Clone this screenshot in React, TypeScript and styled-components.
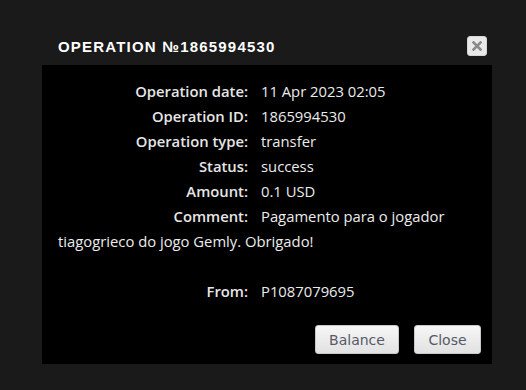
import React from "react";
import styled, { createGlobalStyle } from "styled-components";

const GlobalStyle = createGlobalStyle`
  html, body {
    margin: 0;
    padding: 0;
    background: #1a1a1a;
  }
  body {
    width: 526px;
    height: 390px;
    overflow: hidden;
  }
`;

const Page = styled.div`
  display: flex;
  flex-direction: column;
  padding: 25px 0 0 42px;
  height: 390px;
  box-sizing: border-box;
`;

const Dialog = styled.div`
  display: flex;
  flex-direction: column;
  width: 450px;
`;

const Header = styled.div`
  display: flex;
  align-items: center;
  justify-content: space-between;
  height: 40px;
  padding: 0 5px 0 16px;
`;

const Title = styled.h2`
  margin: 0;
  padding-top: 2px;
  font-family: "Liberation Sans", Arial, sans-serif;
  font-size: 15px;
  font-weight: bold;
  letter-spacing: 1.2px;
  color: #ffffff;
`;

const CloseIcon = styled.button`
  display: flex;
  align-items: center;
  justify-content: center;
  width: 20px;
  height: 20px;
  padding: 0;
  margin-top: 1px;
  border: 1px solid #d6d6d6;
  border-radius: 3px;
  background: #e9e9e9;
  cursor: pointer;
`;

const Body = styled.div`
  background: #000000;
  padding: 14px 16px 10px 16px;
`;

const Info = styled.div`
  font-family: "Open Sans", sans-serif;
  font-size: 14.8px;
  line-height: 25px;
  color: #ececec;
`;

const Row = styled.div`
  display: block;
`;

const Label = styled.span`
  display: inline-block;
  width: 190px;
  margin-right: 13px;
  text-align: right;
  font-weight: 600;
  color: #e6e6e6;
`;

const Footer = styled.div`
  display: flex;
  justify-content: flex-end;
  gap: 15px;
  margin-top: 21px;
  margin-right: -5px;
`;

const Button = styled.button<{ $w: number }>`
  width: ${(p) => p.$w}px;
  height: 29px;
  border: 1px solid #c9c9c9;
  border-radius: 3px;
  background: linear-gradient(#f6f6f6, #ececec 50%, #e2e2e2);
  font-family: "DejaVu Sans", sans-serif;
  font-size: 14px;
  color: #555a66;
  cursor: pointer;
`;

const rows: [string, string][] = [
  ["Operation date:", "11 Apr 2023 02:05"],
  ["Operation ID:", "1865994530"],
  ["Operation type:", "transfer"],
  ["Status:", "success"],
  ["Amount:", "0.1 USD"],
];

export default function App() {
  return (
    <>
      <GlobalStyle />
      <Page>
        <Dialog>
          <Header>
            <Title>OPERATION №1865994530</Title>
            <CloseIcon aria-label="close">
              <svg width="10" height="10" viewBox="0 0 10 10">
                <path d="M1.5 1.5 L8.5 8.5 M8.5 1.5 L1.5 8.5" stroke="#8a8a8a" strokeWidth="2.6" strokeLinecap="square" />
              </svg>
            </CloseIcon>
          </Header>
          <Body>
            <Info>
              {rows.map(([k, v]) => (
                <Row key={k}>
                  <Label>{k}</Label>
                  {v}
                </Row>
              ))}
              <Row>
                <Label>Comment:</Label>
                Pagamento para o jogador tiagogrieco do jogo Gemly. Obrigado!
              </Row>
              <br />
              <Row>
                <Label>From:</Label>
                P1087079695
              </Row>
            </Info>
            <Footer>
              <Button $w={84}>Balance</Button>
              <Button $w={67}>Close</Button>
            </Footer>
          </Body>
        </Dialog>
      </Page>
    </>
  );
}
